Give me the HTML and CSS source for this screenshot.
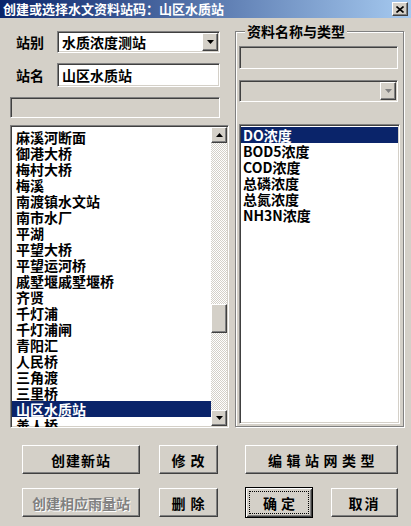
FILE: index.html
```html
<!DOCTYPE html>
<html lang="zh-CN">
<head>
    <meta charset="UTF-8">
    <title>创建或选择水文资料站码</title>
    <link rel="stylesheet" href="styles.css">
</head>
<body>
    <div class="dialog">
        <!-- 标题栏 -->
        <div class="titlebar">
            <span class="title">创建或选择水文资料站码：山区水质站</span>
            <span class="close-btn">
                <svg width="8" height="7" viewBox="0 0 8 7"><path d="M0.5 0.5 L7.5 6.5 M7.5 0.5 L0.5 6.5" stroke="#000" stroke-width="1.6"/></svg>
            </span>
        </div>

        <div class="main">
            <!-- 左侧：站点选择 -->
            <div class="left-col">
                <div class="field-row">
                    <label class="field-label">站别</label>
                    <div class="combo sunken">
                        <span class="combo-text">水质浓度测站</span>
                        <span class="drop-btn raised">
                            <svg width="7" height="4" viewBox="0 0 7 4"><polygon points="0,0 7,0 3.5,4" fill="#000"/></svg>
                        </span>
                    </div>
                </div>
                <div class="field-row name-row">
                    <label class="field-label">站名</label>
                    <div class="textbox sunken">山区水质站</div>
                </div>
                <div class="blank-box sunken"></div>

                <div class="listbox station-list sunken">
                    <ul class="items">
                        <li>麻溪河断面</li>
                        <li>御港大桥</li>
                        <li>梅村大桥</li>
                        <li>梅溪</li>
                        <li>南渡镇水文站</li>
                        <li>南市水厂</li>
                        <li>平湖</li>
                        <li>平望大桥</li>
                        <li>平望运河桥</li>
                        <li>戚墅堰戚墅堰桥</li>
                        <li>齐贤</li>
                        <li>千灯浦</li>
                        <li>千灯浦闸</li>
                        <li>青阳汇</li>
                        <li>人民桥</li>
                        <li>三角渡</li>
                        <li>三里桥</li>
                        <li class="selected">山区水质站</li>
                        <li>善人桥</li>
                    </ul>
                    <div class="vscroll">
                        <span class="sb-btn raised">
                            <svg width="7" height="4" viewBox="0 0 7 4"><polygon points="0,4 7,4 3.5,0" fill="#000"/></svg>
                        </span>
                        <div class="sb-track">
                            <span class="sb-thumb raised"></span>
                        </div>
                        <span class="sb-btn raised">
                            <svg width="7" height="4" viewBox="0 0 7 4"><polygon points="0,0 7,0 3.5,4" fill="#000"/></svg>
                        </span>
                    </div>
                </div>
            </div>

            <!-- 右侧：资料名称与类型 -->
            <fieldset class="group">
                <legend>资料名称与类型</legend>
                <div class="blank-box group-field sunken"></div>
                <div class="combo group-combo sunken">
                    <span class="combo-text"></span>
                    <span class="drop-btn raised">
                        <svg width="7" height="4" viewBox="0 0 7 4"><polygon points="0,0 7,0 3.5,4" fill="#808080"/></svg>
                    </span>
                </div>
                <div class="listbox type-list sunken">
                    <ul class="items">
                        <li class="selected">DO浓度</li>
                        <li>BOD5浓度</li>
                        <li>COD浓度</li>
                        <li>总磷浓度</li>
                        <li>总氮浓度</li>
                        <li>NH3N浓度</li>
                    </ul>
                </div>
            </fieldset>
        </div>

        <!-- 按钮 -->
        <div class="buttons">
            <div class="btn-row">
                <button class="btn raised w-wide">创建新站</button>
                <button class="btn raised w-small gap-a">修 改</button>
                <button class="btn raised w-edit gap-b spaced">编辑站网类型</button>
            </div>
            <div class="btn-row">
                <button class="btn raised w-wide disabled">创建相应雨量站</button>
                <button class="btn raised w-small gap-a">删 除</button>
                <button class="btn default w-ok gap-b">确定</button>
                <button class="btn raised w-cancel gap-c">取消</button>
            </div>
        </div>
    </div>
</body>
</html>
```

FILE: styles.css
```css
* {
    box-sizing: border-box;
}
body {
    margin: 0;
    background-color: #d4d0c8;
    font-family: "Noto Sans CJK SC", "Liberation Sans", sans-serif;
    font-size: 14px;
    font-weight: bold;
    color: #000;
}
ul {
    margin: 0;
    padding: 0;
    list-style: none;
}
.dialog {
    width: 411px;
    height: 526px;
    overflow: hidden;
}

/* 3D 边框 */
.sunken {
    border: 1px solid;
    border-color: #808080 #fff #fff #808080;
    padding: 1px;
    box-shadow: inset 1px 1px #404040, inset -1px -1px #d4d0c8;
}
.raised {
    border: 1px solid;
    border-color: #fff #404040 #404040 #fff;
    box-shadow: inset -1px -1px #808080, inset 1px 1px #d4d0c8;
    background-color: #d4d0c8;
}

/* 标题栏 */
.titlebar {
    height: 18px;
    display: flex;
    align-items: center;
    justify-content: space-between;
    padding: 0 3px 0 3px;
    background: linear-gradient(to right, #0a246a, #a6caf0);
}
.title {
    color: #fff;
    font-size: 13px;
    line-height: 16px;
    white-space: nowrap;
}
.close-btn {
    width: 16px;
    height: 14px;
    display: flex;
    align-items: center;
    justify-content: center;
    border: 1px solid;
    border-color: #fff #404040 #404040 #fff;
    box-shadow: inset -1px -1px #808080;
    background-color: #d4d0c8;
}

.main {
    display: flex;
    align-items: flex-start;
    padding-left: 10px;
}

/* 左侧 */
.left-col {
    width: 219px;
    padding-top: 13px;
}
.field-row {
    display: flex;
    align-items: center;
    padding-left: 6px;
}
.name-row {
    margin-top: 10px;
}
.field-label {
    width: 41px;
    line-height: 16px;
}
.combo {
    width: 163px;
    height: 22px;
    display: flex;
    align-items: stretch;
    background-color: #fff;
}
.combo-text {
    flex: 1;
    padding-left: 3px;
    line-height: 18px;
    white-space: nowrap;
}
.drop-btn {
    width: 16px;
    display: flex;
    align-items: center;
    justify-content: center;
}
.textbox {
    width: 163px;
    height: 24px;
    padding-left: 4px;
    line-height: 21px;
    background-color: #fff;
}
.blank-box {
    margin-top: 10px;
    width: 210px;
    height: 21px;
}

.listbox {
    background-color: #fff;
    overflow: hidden;
}
.listbox .items li {
    height: 16px;
    line-height: 16px;
    white-space: nowrap;
}
.listbox .items li.selected {
    background-color: #0a246a;
    color: #fff;
}
.station-list {
    margin-top: 7px;
    height: 303px;
    display: flex;
}
.station-list .items {
    flex: 1;
    padding-top: 2px;
}
.station-list .items li {
    padding-left: 4px;
}

/* 滚动条 */
.vscroll {
    width: 16px;
    display: flex;
    flex-direction: column;
}
.sb-btn {
    height: 16px;
    display: flex;
    align-items: center;
    justify-content: center;
}
.sb-track {
    flex: 1;
    background: repeating-conic-gradient(#fff 0 25%, #d4d0c8 0 50%) 0 0 / 2px 2px;
}
.sb-thumb {
    display: block;
    height: 29px;
    margin-top: 161px;
}

/* 右侧分组框 */
.group {
    margin: 5px 0 0 6px;
    width: 169px;
    min-inline-size: 0;
    padding: 7px 4px 2px 3px;
    border: 1px solid #808080;
    box-shadow: inset 1px 1px #fff, 1px 1px #fff;
}
.group legend {
    margin-left: 6px;
    padding: 0 2px;
    line-height: 16px;
    background-color: #d4d0c8;
}
.group-field {
    margin-top: 0;
    width: 159px;
    height: 23px;
}
.group-combo {
    margin-top: 11px;
    width: 159px;
    background-color: #d4d0c8;
}
.type-list {
    margin-top: 22px;
    width: 161px;
    height: 300px;
}
.type-list .items {
    padding-top: 1px;
}
.type-list .items li {
    padding-left: 2px;
}

/* 按钮 */
.buttons {
    padding: 17px 0 0 22px;
}
.btn-row {
    display: flex;
    align-items: center;
    height: 29px;
}
.btn-row + .btn-row {
    margin-top: 14px;
}
.btn {
    height: 29px;
    padding: 0;
    font-family: inherit;
    font-size: 14px;
    font-weight: bold;
    color: #000;
    letter-spacing: 1px;
    white-space: nowrap;
}
.w-wide { width: 118px; }
.w-small { width: 59px; }
.w-edit { width: 153px; }
.w-ok { width: 68px; }
.w-cancel { width: 67px; letter-spacing: 2px; }
.gap-a { margin-left: 19px; }
.gap-b { margin-left: 27px; }
.gap-c { margin-left: 18px; }
.spaced {
    letter-spacing: 4.5px;
    text-indent: 4px;
}
.btn.disabled {
    color: #808080;
    letter-spacing: 0;
    text-shadow: 1px 1px #fff;
}
.btn.default {
    height: 31px;
    border: 1px solid #000;
    background-color: #d4d0c8;
    box-shadow: inset 1px 1px #fff, inset -1px -1px #404040, inset 2px 2px #d4d0c8, inset -2px -2px #808080;
    outline: 1px dotted #000;
    outline-offset: -5px;
    letter-spacing: 4px;
    text-indent: 4px;
}
```
